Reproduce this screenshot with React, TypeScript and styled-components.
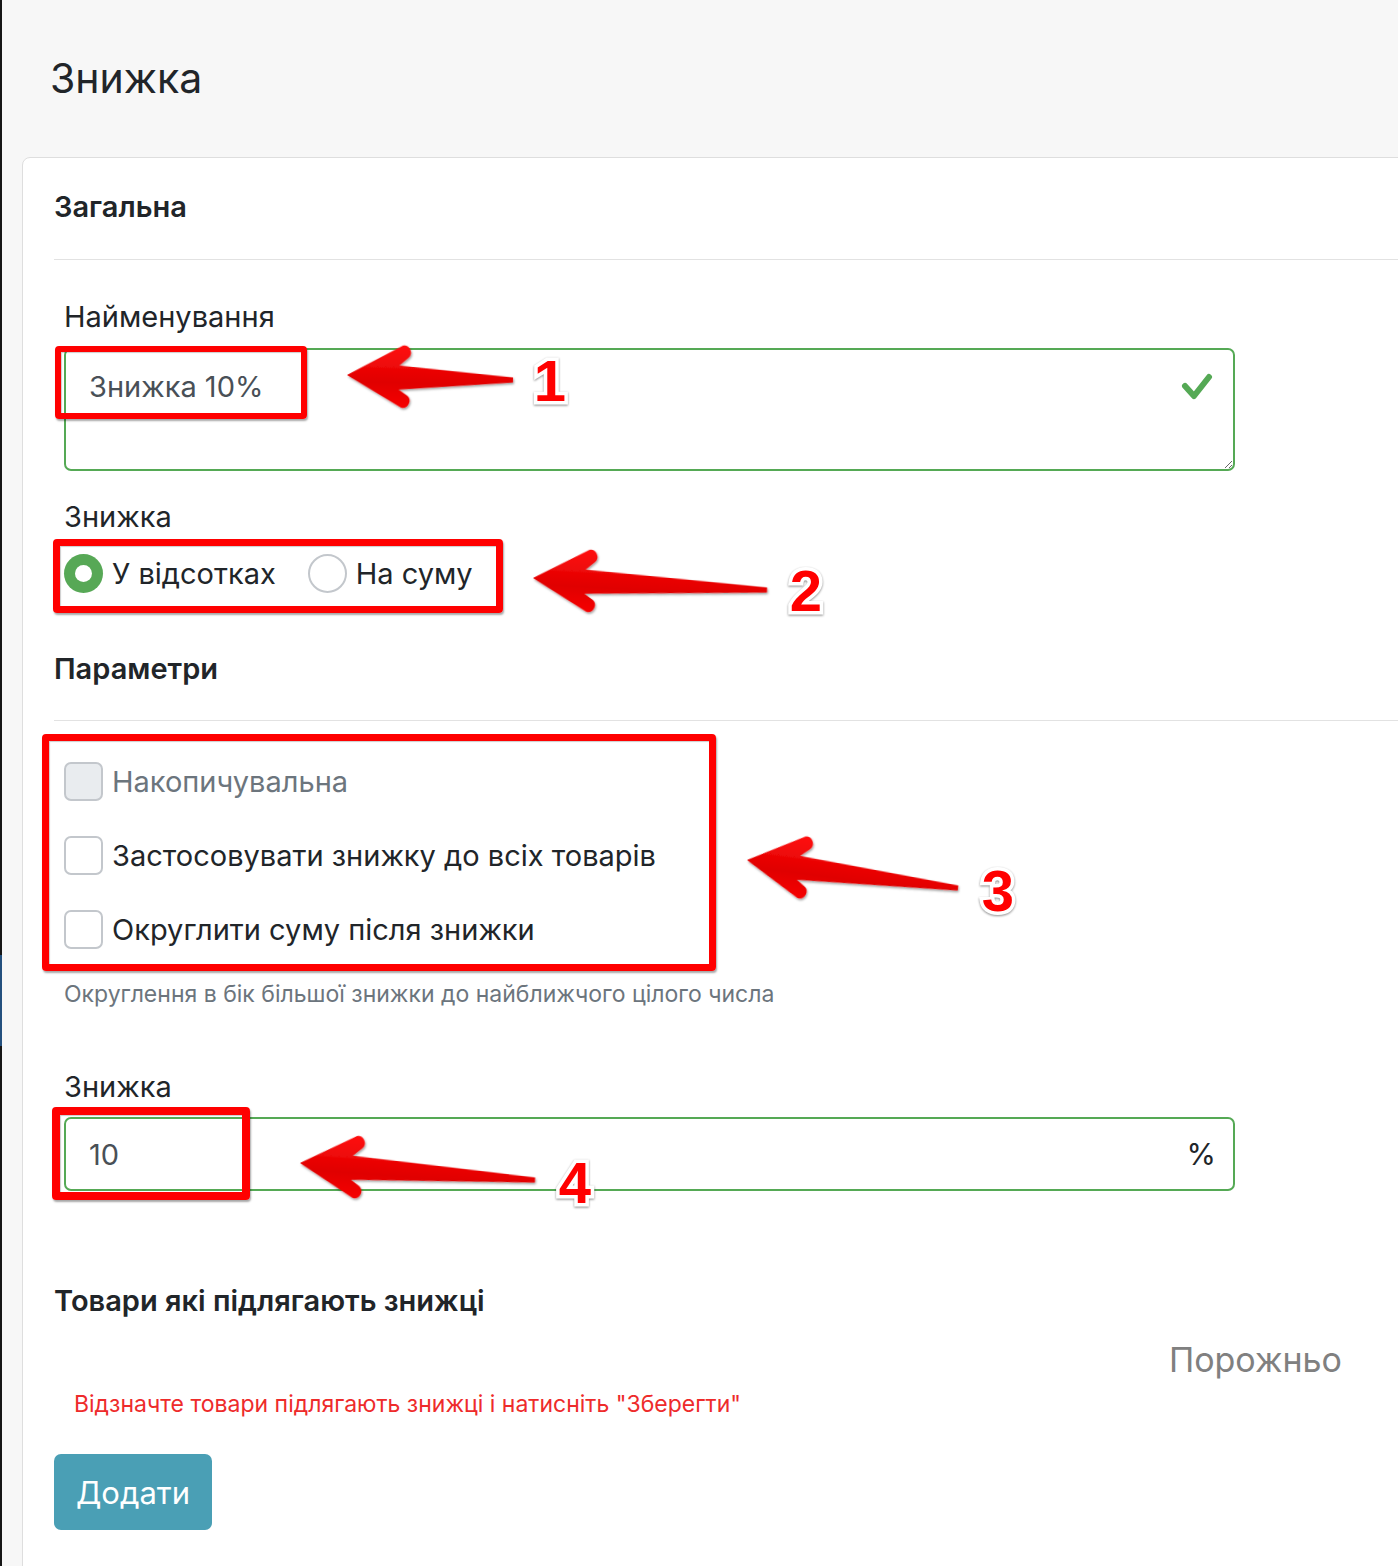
import React from 'react';
import styled, { createGlobalStyle } from 'styled-components';

const GREEN = '#55a955';
const TEXT = '#212529';
const MUTED = '#6c757d';

const Global = createGlobalStyle`
  html, body { margin: 0; padding: 0; background: #f7f7f7; }
  body {
    font-family: Inter, "Noto Sans", "Liberation Sans", sans-serif;
    color: ${TEXT};
    -webkit-font-smoothing: antialiased;
  }
  * { box-sizing: border-box; }
`;

const Page = styled.div`
  position: relative;
  display: flex;
  width: 1398px;
  height: 1566px;
  overflow: hidden;
  background: #f7f7f7;
`;

const EdgeStrip = styled.div`
  flex: 0 0 2px;
  background: linear-gradient(
    to bottom,
    #161616 0, #161616 955px,
    #24507e 955px, #24507e 1046px,
    #161616 1046px
  );
`;

const Main = styled.main`
  flex: 1;
  min-width: 0;
  padding-left: 20px;
  display: flex;
  flex-direction: column;
`;

const Title = styled.h1`
  margin: 0;
  height: 157px;
  padding: 54px 0 0 28px;
  font-size: 41px;
  font-weight: 400;
  line-height: 49px;
  color: ${TEXT};
  flex: none;
`;

const Card = styled.section`
  flex: none;
  height: 1450px;
  margin-right: -40px;
  background: #fff;
  border: 1px solid #dedede;
  border-radius: 8px;
  padding: 31px 0 0 31px;
`;

const SectionTitle = styled.h2<{ $mt?: number }>`
  margin: ${p => p.$mt ?? 0}px 0 0;
  font-size: 29px;
  line-height: 36px;
  font-weight: 600;
  color: ${TEXT};
`;

const Divider = styled.hr<{ $mt: number; $mb: number }>`
  margin: ${p => p.$mt}px 0 ${p => p.$mb}px;
  border: none;
  height: 1px;
  background: #e2e2e2;
`;

const Field = styled.div<{ $mt?: number }>`
  width: 1181px;
  padding-left: 10px;
  margin-top: ${p => p.$mt ?? 0}px;
`;

const Label = styled.div<{ $mb: number }>`
  font-size: 29px;
  line-height: 36px;
  color: ${TEXT};
  margin-bottom: ${p => p.$mb}px;
`;

const TextAreaWrap = styled.div`
  position: relative;
`;

const TextArea = styled.textarea`
  display: block;
  width: 100%;
  height: 123px;
  border: 2px solid ${GREEN};
  border-radius: 7px;
  padding: 15px 70px 15px 23px;
  font-family: inherit;
  font-size: 29px;
  line-height: 1.5;
  color: #495057;
  background: #fff;
  resize: vertical;
  outline: none;
`;

const ValidIcon = styled.svg`
  position: absolute;
  right: 21px;
  top: 23px;
  width: 34px;
  height: 31px;
`;

const RadioGroup = styled.div`
  display: flex;
  align-items: center;
  gap: 32px;
  height: 39px;
`;

const Option = styled.label<{ $muted?: boolean }>`
  display: flex;
  align-items: center;
  gap: 9px;
  font-size: 29px;
  line-height: 39px;
  color: ${p => (p.$muted ? MUTED : TEXT)};
`;

const RadioDot = styled.span<{ $checked?: boolean }>`
  flex: none;
  width: 39px;
  height: 39px;
  border-radius: 50%;
  display: flex;
  align-items: center;
  justify-content: center;
  background: ${p => (p.$checked ? '#57a856' : '#fff')};
  border: ${p => (p.$checked ? 'none' : '2px solid #c3c7cc')};
  &::after {
    content: '';
    display: ${p => (p.$checked ? 'block' : 'none')};
    width: 17px;
    height: 17px;
    border-radius: 50%;
    background: #fff;
  }
`;

const CheckList = styled.div`
  display: flex;
  flex-direction: column;
  gap: 35px;
`;

const CheckBox = styled.span<{ $disabled?: boolean }>`
  flex: none;
  width: 39px;
  height: 39px;
  border-radius: 7px;
  border: 2px solid #c3c7cc;
  background: ${p => (p.$disabled ? '#e9ecef' : '#fff')};
`;

const Help = styled.div`
  margin-top: 32px;
  font-size: 23px;
  line-height: 26px;
  color: ${MUTED};
`;

const InputGroup = styled.div`
  display: flex;
  align-items: center;
  height: 74px;
  border: 2px solid ${GREEN};
  border-radius: 7px;
  background: #fff;
  padding: 0 17px 0 23px;
`;

const Input = styled.input`
  flex: 1;
  min-width: 0;
  border: none;
  outline: none;
  padding: 0;
  font-family: inherit;
  font-size: 29px;
  color: #495057;
  background: transparent;
`;

const Suffix = styled.span`
  font-size: 30px;
  color: ${TEXT};
`;

const EmptyNote = styled.div`
  width: 1288px;
  margin-top: 20px;
  text-align: right;
  font-size: 34px;
  line-height: 42px;
  color: #808080;
`;

const Hint = styled.div`
  margin-top: 9px;
  padding-left: 20px;
  font-size: 23px;
  line-height: 28px;
  color: #ee2b2b;
`;

const AddButton = styled.button`
  margin-top: 36px;
  width: 158px;
  height: 76px;
  border: none;
  border-radius: 7px;
  background: #4a9fb5;
  color: #fff;
  font-family: inherit;
  font-size: 31px;
  padding: 0;
`;

/* ---------- annotation overlay ---------- */

const Overlay = styled.div`
  position: absolute;
  inset: 0;
  pointer-events: none;
`;

const MarkBox = styled.div<{ $x: number; $y: number; $w: number; $h: number; $b: number }>`
  position: absolute;
  left: ${p => p.$x}px;
  top: ${p => p.$y}px;
  width: ${p => p.$w}px;
  height: ${p => p.$h}px;
  border: ${p => p.$b}px solid #ff0000;
  border-radius: 4px;
  box-shadow: 1px 2px 2px rgba(0, 0, 0, 0.35), inset 1px 1px 1px rgba(0, 0, 0, 0.2);
`;

const StepNumber = styled.span<{ $cx: number; $cy: number }>`
  position: absolute;
  left: ${p => p.$cx - 30}px;
  top: ${p => p.$cy - 29}px;
  width: 60px;
  text-align: center;
  font-family: "Liberation Sans", Arial, sans-serif;
  font-weight: 700;
  font-size: 58px;
  line-height: 58px;
  color: #ff0000;
  -webkit-text-stroke: 7px #fff;
  paint-order: stroke fill;
  filter: drop-shadow(0 1px 1px rgba(0, 0, 0, 0.45));
`;

const ArrowLayer = styled.svg`
  position: absolute;
  left: 0;
  top: 0;
`;

type Arrow = { tx: number; ty: number; ex: number; ey: number };

const arrows: Arrow[] = [
  { tx: 347, ty: 375, ex: 513, ey: 380 },
  { tx: 533, ty: 578, ex: 767, ey: 590 },
  { tx: 747, ty: 860, ex: 958, ey: 888 },
  { tx: 300, ty: 1163, ex: 535, ey: 1180 },
];

const arrowPath = (L: number) =>
  `M0 0 L55 -31 A7 7 0 0 1 61 -19 L52 -11 L${L} -2.5 L${L} 2.5 L52 13 L61 19 A7 7 0 0 1 55 31 Z`;

const Arrows: React.FC = () => (
  <ArrowLayer width={1398} height={1566} viewBox="0 0 1398 1566">
    <defs>
      <linearGradient id="arrowFill" x1="0" y1="0" x2="0" y2="1">
        <stop offset="0" stopColor="#ff1010" />
        <stop offset="0.6" stopColor="#e00000" />
        <stop offset="1" stopColor="#f60000" />
      </linearGradient>
      <filter id="arrowShadow" x="-10%" y="-30%" width="120%" height="160%">
        <feDropShadow dx="1" dy="1.5" stdDeviation="1" floodColor="#000" floodOpacity="0.4" />
      </filter>
    </defs>
    {arrows.map((a, i) => {
      const dx = a.ex - a.tx;
      const dy = a.ey - a.ty;
      const L = Math.sqrt(dx * dx + dy * dy);
      const ang = (Math.atan2(dy, dx) * 180) / Math.PI;
      return (
        <path
          key={i}
          d={arrowPath(L)}
          fill="url(#arrowFill)"
          filter="url(#arrowShadow)"
          transform={`translate(${a.tx} ${a.ty}) rotate(${ang})`}
        />
      );
    })}
  </ArrowLayer>
);

export default function App() {
  return (
    <>
      <Global />
      <Page>
        <EdgeStrip />
        <Main>
          <Title>Знижка</Title>
          <Card>
            <SectionTitle>Загальна</SectionTitle>
            <Divider $mt={34} $mb={39} />

            <Field>
              <Label $mb={13}>Найменування</Label>
              <TextAreaWrap>
                <TextArea readOnly defaultValue="Знижка 10%" />
                <ValidIcon viewBox="0 0 34 31">
                  <path
                    d="M5 15 L14 25 L29 6"
                    fill="none"
                    stroke={GREEN}
                    strokeWidth="6"
                    strokeLinecap="round"
                    strokeLinejoin="round"
                  />
                </ValidIcon>
              </TextAreaWrap>
            </Field>

            <Field $mt={28}>
              <Label $mb={19}>Знижка</Label>
              <RadioGroup>
                <Option>
                  <RadioDot $checked />
                  У відсотках
                </Option>
                <Option>
                  <RadioDot />
                  На суму
                </Option>
              </RadioGroup>
            </Field>

            <SectionTitle $mt={58}>Параметри</SectionTitle>
            <Divider $mt={33} $mb={41} />

            <Field>
              <CheckList>
                <Option $muted>
                  <CheckBox $disabled />
                  Накопичувальна
                </Option>
                <Option>
                  <CheckBox />
                  Застосовувати знижку до всіх товарів
                </Option>
                <Option>
                  <CheckBox />
                  Округлити суму після знижки
                </Option>
              </CheckList>
              <Help>Округлення в бік більшої знижки до найближчого цілого числа</Help>
            </Field>

            <Field $mt={62}>
              <Label $mb={12}>Знижка</Label>
              <InputGroup>
                <Input readOnly defaultValue="10" />
                <Suffix>%</Suffix>
              </InputGroup>
            </Field>

            <SectionTitle $mt={92}>Товари які підлягають знижці</SectionTitle>
            <EmptyNote>Порожньо</EmptyNote>
            <Hint>Відзначте товари підлягають знижці і натисніть "Зберегти"</Hint>
            <AddButton type="button">Додати</AddButton>
          </Card>
        </Main>

        <Overlay>
          <MarkBox $x={55} $y={346} $w={252} $h={73} $b={6} />
          <MarkBox $x={53} $y={539} $w={450} $h={74} $b={7} />
          <MarkBox $x={42} $y={734} $w={674} $h={237} $b={7} />
          <MarkBox $x={52} $y={1107} $w={198} $h={93} $b={8} />
          <Arrows />
          <StepNumber $cx={550} $cy={381}>1</StepNumber>
          <StepNumber $cx={806} $cy={591}>2</StepNumber>
          <StepNumber $cx={998} $cy={891}>3</StepNumber>
          <StepNumber $cx={575} $cy={1183}>4</StepNumber>
        </Overlay>
      </Page>
    </>
  );
}
